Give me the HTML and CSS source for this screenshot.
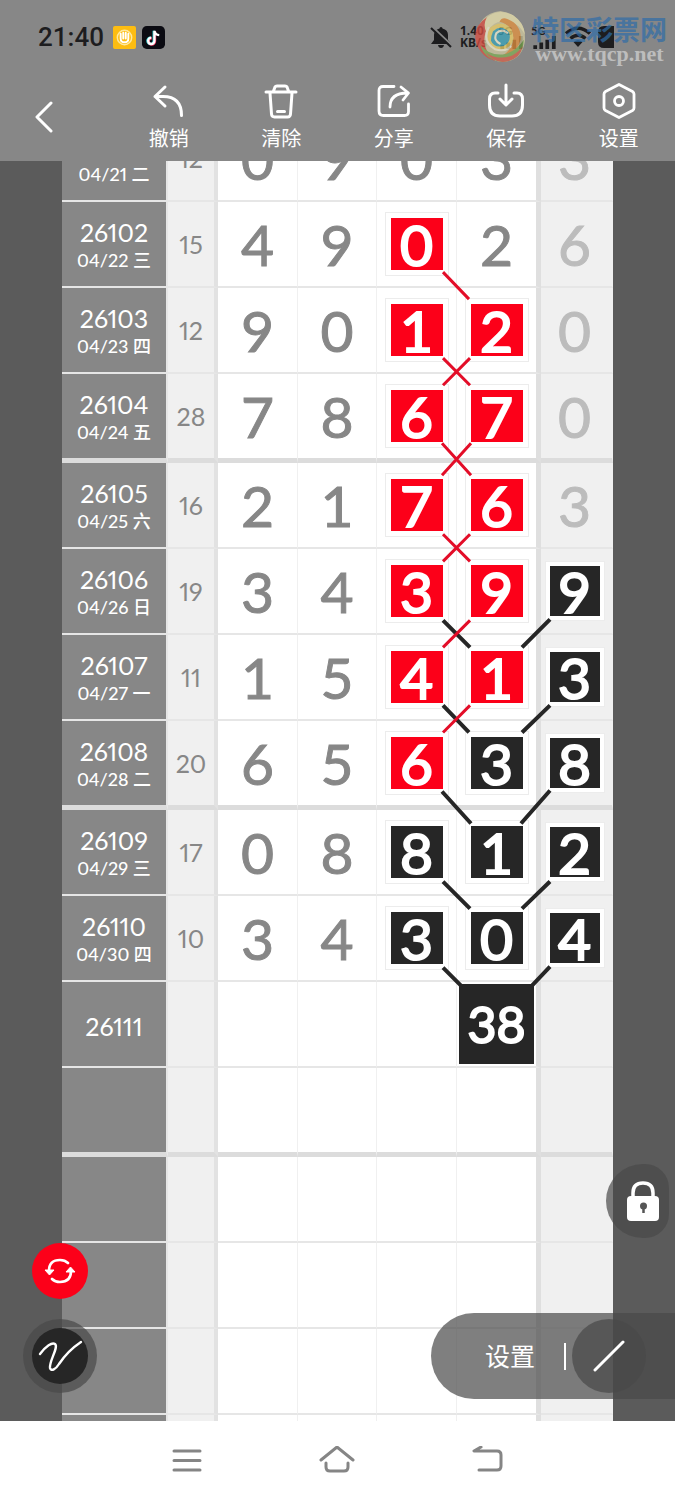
FILE: index.html
```html
<!DOCTYPE html>
<html lang="zh-CN">
<head>
  <meta charset="UTF-8">
  <meta name="viewport" content="width=device-width, initial-scale=1.0">
  <title>走势图</title>
  <link rel="stylesheet" href="styles.css">
</head>
<body>
  <header>
    <div class="status-bar">
      <span class="time">21:40</span>
      <svg class="app-icon" viewBox="0 0 24 24">
        <rect width="24" height="24" rx="2" fill="#fdbd12"/>
        <circle cx="12" cy="12" r="7.500" fill="none" stroke="#ffe9a0" stroke-width="1.500"/>
        <path d="M8 8v5q0 4 4 4t4-4V8M10.700 7v6M13.300 7v6" fill="none" stroke="#fff" stroke-width="2" stroke-linecap="round"/>
      </svg>
      <svg class="app-icon" viewBox="0 0 24 24">
        <rect width="24" height="24" rx="5" fill="#0b0b12"/>
        <path d="M12.300 5v10.500a3.300 3.300 0 1 1-3.300-3.300" fill="none" stroke="#35e0e0" stroke-width="2.600"/>
        <path d="M13.500 5.500v10.500a3.300 3.300 0 1 1-3.300-3.300" fill="none" stroke="#f2335d" stroke-width="2.600"/>
        <path d="M13 5v10.500a3.300 3.300 0 1 1-3.300-3.300M13 5q.5 4 5 4.500" fill="none" stroke="#fff" stroke-width="2.400"/>
      </svg>
      <div class="status-right">
        <svg class="bell" viewBox="0 0 22 22">
          <path d="M11 1q1.500 0 1.500 1.600Q18 4 18 9v5l3 4H1l3-4V9q0-5 5.500-6.400Q9.500 1 11 1zM8 19h6q-.5 3-3 3t-3-3z" fill="#1d1d1f"/>
          <path d="M2 .5l20 19" stroke="#878787" stroke-width="2"/>
          <path d="M1 2l20 19" stroke="#1d1d1f" stroke-width="2"/>
        </svg>
        <span class="speed">1.40<br>KB/s</span>
        <span class="signal first">5G
          <svg viewBox="0 0 27 14"><path d="M3.500 14v-4M10 14V7M16.500 14V4M23.500 14V0" stroke="#1d1d1f" stroke-width="4"/></svg>
        </span>
        <span class="signal">5G
          <svg viewBox="0 0 27 14"><path d="M3.500 14v-4M10 14V7M16.500 14V4M23.500 14V0" stroke="#1d1d1f" stroke-width="4"/></svg>
        </span>
        <svg class="wifi" viewBox="0 0 28 24">
          <path d="M2 8.500Q14-2 26 8.500M6.500 13.500q7.500-6.500 15 0" fill="none" stroke="#1d1d1f" stroke-width="3.500"/>
          <path d="M9.500 17q4.500-3.500 9 0L14 22z" fill="#1d1d1f"/>
        </svg>
        <svg class="battery" viewBox="0 0 16 24"><path d="M16 1H6Q0 1 0 7v10q0 6 6 6h10z" fill="#1d1d1f"/></svg>
      </div>
    </div>

    <nav class="toolbar">
      <button class="back" aria-label="返回">
        <svg viewBox="0 0 18 32"><path d="M16 2L2 16l14 14" fill="none" stroke="#fff" stroke-width="3" stroke-linecap="round" stroke-linejoin="round"/></svg>
      </button>
      <button>
        <svg viewBox="0 0 36 36"><path d="M14 4L4 13.500 14 23M4 13.500h8q18.500 0 18.500 19" fill="none" stroke="#fff" stroke-width="3" stroke-linecap="round" stroke-linejoin="round"/></svg>
        <span>撤销</span>
      </button>
      <button>
        <svg viewBox="0 0 36 36"><path d="M3 9h30M10.500 8l1.500-4q.5-1 2-1h8q1.500 0 2 1l1.500 4M7 10l1.500 21q.200 3 3 3h13q2.800 0 3-3L29 10M14.500 28.500h7" fill="none" stroke="#fff" stroke-width="3" stroke-linecap="round" stroke-linejoin="round"/></svg>
        <span>清除</span>
      </button>
      <button>
        <svg viewBox="0 0 36 36"><path d="M18 3.500H7q-4 0-4 4V28q0 4.500 4.500 4.500h21q4 0 4-4V21M14 24q0-14 17.500-14M25 4l7.500 6L27 17" fill="none" stroke="#fff" stroke-width="2.800" stroke-linecap="round" stroke-linejoin="round"/></svg>
        <span>分享</span>
      </button>
      <button>
        <svg viewBox="0 0 36 36"><path d="M10 10H7q-5.500 0-5.500 6v6Q1.500 33 12 33h12q10.500 0 10.500-11v-6q0-6-5.500-6h-3M18 2v19M12 16l6 6 6-6" fill="none" stroke="#fff" stroke-width="3" stroke-linecap="round" stroke-linejoin="round"/></svg>
        <span>保存</span>
      </button>
      <button>
        <svg viewBox="0 0 36 36"><path d="M18 1.500l13.500 7q1.500 1 1.500 2.500v14q0 1.500-1.500 2.500L18 34.500l-13.500-7Q3 26.500 3 25V11q0-1.500 1.500-2.500z" fill="none" stroke="#fff" stroke-width="2.800" stroke-linejoin="round"/><circle cx="18" cy="18" r="4.500" fill="none" stroke="#fff" stroke-width="2.800"/></svg>
        <span>设置</span>
      </button>
    </nav>
  </header>

  <div class="watermark">
    <svg viewBox="0 0 50 50">
      <path d="M25 1Q2 4 3 28q4 19 24 21 18-1 21-19Q50 6 25 1z" fill="#cfc9a0"/>
      <path d="M12 7Q-2 16 2 31q5 14 18 17Q8 38 10 25 12 12 24 9q-7-4-12-2z" fill="#dc4f42"/>
      <path d="M12 7Q24-2 37 5q10 7 11 18-6-11-17-12Q17 9 12 22 8 14 12 7z" fill="#ece3ae"/>
      <path d="M30 8q15 5 14 20-4 15-20 17 13-7 13-19-1-12-13-15 2-4 6-3z" fill="#e4923f"/>
      <path d="M6 33q8 10 21 9 12-2 20-14-1 19-20 21Q10 47 6 33z" fill="#7fae55"/>
      <path d="M11 40q12 8 25 3 7-4 10-9-3 14-19 15-10-1-16-9z" fill="#d9604a"/>
      <path d="M15 17q11-9 20 1 6 12-5 19-12 5-17-6-2-8 2-14z" fill="#efd268"/>
      <path d="M18 20q8-7 15 1 3 9-5 13-9 2-12-5 0-5 2-9z" fill="#3aa3ba"/>
      <path d="M14 16q-7 14 6 21 9 3 15-3M32 22q-6-5-11 0-3 7 4 10" fill="none" stroke="#f4efd2" stroke-width="2"/>
    </svg>
    <div>
      <div class="site-name">特区彩票网</div>
      <div class="site-url">www.tqcp.net</div>
    </div>
  </div>

  <main>
    <div class="chart">
      <table>
        <colgroup>
          <col class="col-period"><col class="col-sum"><col class="col-a"><col class="col-b"><col class="col-a"><col class="col-d"><col class="col-last">
        </colgroup>
        <tbody>
          <tr><th>26101<small>04/21 二</small></th><td>12</td><td>0</td><td>9</td><td>0</td><td>3</td><td>3</td></tr>
          <tr><th>26102<small>04/22 三</small></th><td>15</td><td>4</td><td>9</td><td><span class="mark red">0</span></td><td>2</td><td>6</td></tr>
          <tr><th>26103<small>04/23 四</small></th><td>12</td><td>9</td><td>0</td><td><span class="mark red">1</span></td><td><span class="mark red">2</span></td><td>0</td></tr>
          <tr class="week-end"><th>26104<small>04/24 五</small></th><td>28</td><td>7</td><td>8</td><td><span class="mark red">6</span></td><td><span class="mark red">7</span></td><td>0</td></tr>
          <tr><th>26105<small>04/25 六</small></th><td>16</td><td>2</td><td>1</td><td><span class="mark red">7</span></td><td><span class="mark red">6</span></td><td>3</td></tr>
          <tr><th>26106<small>04/26 日</small></th><td>19</td><td>3</td><td>4</td><td><span class="mark red">3</span></td><td><span class="mark red">9</span></td><td><span class="mark">9</span></td></tr>
          <tr><th>26107<small>04/27 一</small></th><td>11</td><td>1</td><td>5</td><td><span class="mark red">4</span></td><td><span class="mark red">1</span></td><td><span class="mark">3</span></td></tr>
          <tr class="week-end"><th>26108<small>04/28 二</small></th><td>20</td><td>6</td><td>5</td><td><span class="mark red">6</span></td><td><span class="mark">3</span></td><td><span class="mark">8</span></td></tr>
          <tr><th>26109<small>04/29 三</small></th><td>17</td><td>0</td><td>8</td><td><span class="mark">8</span></td><td><span class="mark">1</span></td><td><span class="mark">2</span></td></tr>
          <tr><th>26110<small>04/30 四</small></th><td>10</td><td>3</td><td>4</td><td><span class="mark">3</span></td><td><span class="mark">0</span></td><td><span class="mark">4</span></td></tr>
          <tr><th>26111</th><td></td><td></td><td></td><td></td><td><span class="pick">38</span></td><td></td></tr>
          <tr class="week-end"><th></th><td></td><td></td><td></td><td></td><td></td><td></td></tr>
          <tr><th></th><td></td><td></td><td></td><td></td><td></td><td></td></tr>
          <tr><th></th><td></td><td></td><td></td><td></td><td></td><td></td></tr>
          <tr><th></th><td></td><td></td><td></td><td></td><td></td><td></td></tr>
          <tr><th></th><td></td><td></td><td></td><td></td><td></td><td></td></tr>
        </tbody>
      </table>
      <!-- connecting lines between the marked numbers -->
      <svg class="lines" viewBox="62 116 551 1384" preserveAspectRatio="none">
        <path class="red-line" d="M443 272L469 299M443 358L470 385M470 358L443 385M442 443L471 475M471 443L442 475M443 534L470 561M470 534L443 561"/>
        <path class="black-line" d="M443 620L470 647M443 705L469 732"/>
        <path class="red-line" d="M470 620L443 647M470 705L443 732"/>
        <path class="black-line" d="M550 619L522 647M550 705L522 732M442 791L471 823M550 790L521 823M443 881L470 908M550 881L522 908M443 967L462 986M550 966L531 986"/>
      </svg>
    </div>

    <button class="lock" aria-label="锁定">
      <svg viewBox="0 0 34 40">
        <path d="M7 18v-6Q7 2 17 2t10 10v6" fill="none" stroke="#fff" stroke-width="3.500"/>
        <rect x="1" y="15" width="32" height="25" rx="4" fill="#fff"/>
        <circle cx="17.500" cy="25" r="3.500" fill="#555"/><path d="M17.500 25v7" stroke="#555" stroke-width="2.500"/>
      </svg>
    </button>
    <button class="refresh" aria-label="切换">
      <svg viewBox="0 0 32 28">
        <path d="M5 14Q5 3 16 3q5 0 8 3M27 14q0 11-11 11-5 0-8-3" fill="none" stroke="#fff" stroke-width="2.600" stroke-linecap="round"/>
        <path d="M1 13h9l-4.500 5zM22 15h9l-4.500-5z" fill="#fff" stroke="#fff" stroke-width="1" stroke-linejoin="round"/>
      </svg>
    </button>
    <button class="pen" aria-label="画笔">
      <svg viewBox="0 0 56 56"><path d="M8 26C14 18 20 14 23 16C27 19 17 33 18 40C19 44 24 41 27 36C33 27 40 20 49 14" fill="none" stroke="#fff" stroke-width="2.400" stroke-linecap="round"/></svg>
    </button>
    <div class="line-panel">
      <button class="line-settings">设置</button>
      <button class="line-tool" aria-label="直线">
        <svg viewBox="0 0 32 32"><path d="M2 30L30 2" stroke="#fff" stroke-width="3" stroke-linecap="round"/></svg>
      </button>
    </div>
  </main>

  <footer>
    <button aria-label="菜单"><svg viewBox="0 0 36 30"><path d="M5 5h26M5 14.500h26M5 24h26" class="nav-stroke"/></svg></button>
    <button aria-label="主页"><svg viewBox="0 0 36 30"><path d="M2 14L18 1l16 13M7 17v4q0 4 4 4h14q4 0 4-4v-4" class="nav-stroke"/></svg></button>
    <button aria-label="后退"><svg viewBox="0 0 36 30"><path d="M11 1L4 5h23q4 0 4 4v11q0 4-4 4H9" class="nav-stroke"/></svg></button>
  </footer>
</body>
</html>
```

FILE: styles.css
```css
* {
  box-sizing: border-box;
}

body {
  margin: 0;
  height: 100vh;
  display: flex;
  flex-direction: column;
  background: #fff;
  font-family: Lato, "Noto Sans CJK SC", sans-serif;
}

button {
  padding: 0;
  border: none;
  background: none;
  color: #fff;
  font-family: inherit;
  cursor: pointer;
}

svg {
  display: block;
}

header {
  flex: none;
  height: 161px;
  background: #878787;
}

.status-bar {
  display: flex;
  align-items: center;
  height: 74px;
  padding: 0 61px 0 38px;
  color: #1d1d1f;
}

.time {
  margin-right: 9px;
  font-family: Roboto, sans-serif;
  font-size: 26px;
  font-weight: 500;
}

.app-icon {
  width: 23px;
  height: 23px;
  margin-right: 6px;
}

.status-right {
  display: flex;
  align-items: center;
  margin-left: auto;
  gap: 6px;
}

.bell {
  width: 22px;
  height: 22px;
  margin-right: 2px;
}

.speed {
  width: 32px;
  font-family: "Noto Sans", sans-serif;
  font-size: 12px;
  line-height: 12px;
  font-weight: bold;
}

.signal {
  width: 27px;
  font-size: 11px;
  line-height: 11px;
  font-weight: bold;
}

.signal svg {
  width: 27px;
  height: 13px;
}

.wifi {
  width: 28px;
  height: 24px;
}

.battery {
  width: 16px;
  height: 24px;
}

.watermark {
  position: absolute;
  top: 10px;
  right: 8px;
  display: flex;
  gap: 5px;
}

.watermark svg {
  width: 53px;
  height: 53px;
  opacity: 0.75;
}

.site-name {
  color: #2f6da8;
  font-family: "Noto Sans CJK SC", sans-serif;
  font-size: 27px;
  line-height: 38px;
  font-weight: bold;
  opacity: 0.7;
}

.site-url {
  margin-top: -5px;
  color: #bdbdbd;
  font-family: "Liberation Serif", serif;
  font-size: 22px;
  line-height: 22px;
  font-weight: bold;
  text-align: center;
}

.toolbar {
  display: grid;
  grid-template-columns: repeat(6, 1fr);
}

.toolbar button {
  display: flex;
  flex-direction: column;
  align-items: center;
  padding-top: 9px;
  font-size: 20px;
  line-height: 28px;
}

.toolbar button svg {
  width: 36px;
  height: 36px;
  margin-bottom: 5px;
}

.toolbar .back {
  padding: 27px 24px 0 0;
}

.toolbar .back svg {
  width: 18px;
  height: 32px;
}

main {
  position: relative;
  flex: 1;
  overflow: hidden;
  background: #5b5b5b;
}

/* chart is scrolled partway into its first row */
.chart {
  position: relative;
  margin: -45px 62px 0;
}

table {
  width: 100%;
  table-layout: fixed;
  border-collapse: separate;
  border-spacing: 0;
  background: #fff;
}

.col-period { width: 106px; }
.col-sum { width: 50px; }
.col-a { width: 80px; }
.col-b { width: 79px; }
.col-d { width: 84px; }
.col-last { width: 72px; }

th,
td {
  height: 86px;
  padding: 0;
  border-right: 1px solid #f0f0f0;
  border-bottom: 2px solid #e6e6e6;
  color: #878787;
  font-size: 57px;
  font-weight: normal;
  line-height: 64px;
  text-align: center;
  vertical-align: middle;
  -webkit-text-stroke: 1px currentColor;
}

.week-end th,
.week-end td {
  height: 89px;
  border-bottom-width: 5px;
  border-bottom-color: #dcdcdc;
}

th {
  padding-top: 3px;
  border-right: 2px solid #e6e6e6;
  background: #878787;
  color: #fff;
  font-size: 25px;
  line-height: 28px;
  font-variant-numeric: proportional-nums;
  -webkit-text-stroke: 0;
}

th small {
  display: block;
  font-size: 18px;
  font-weight: 500;
}

td:nth-child(2) {
  border-right: 4px solid #e2e2e2;
  background: #f0f0f0;
  font-size: 25px;
  line-height: 28px;
  font-variant-numeric: proportional-nums;
  -webkit-text-stroke: 0;
}

td:nth-child(6) {
  border-right: 5px solid #dfdfdf;
}

td:nth-child(7) {
  padding-right: 4px;
  background: #f0f0f0;
  color: #bcbcbc;
}

.mark {
  display: block;
  width: 64px;
  height: 64px;
  margin: 0 auto;
  border: 1px solid #ececec;
  background: #262626;
  box-shadow: inset 0 0 0 5px #fff;
  color: #fff;
  line-height: 62px;
  -webkit-text-stroke: 2px currentColor;
}

.mark.red {
  background: #fc0019;
}

td:nth-child(7) .mark {
  width: 60px;
  height: 60px;
  box-shadow: inset 0 0 0 4px #fff;
  line-height: 58px;
}

.pick {
  display: block;
  height: 80px;
  margin: 0 2px;
  background: #262626;
  color: #fff;
  font-size: 50px;
  line-height: 80px;
  -webkit-text-stroke: 2px currentColor;
}

.lines {
  position: absolute;
  top: 0;
  left: 0;
  width: 100%;
  height: 100%;
}

.red-line {
  stroke: #e30d28;
  stroke-width: 3;
}

.black-line {
  stroke: #262626;
  stroke-width: 4;
}

.lock {
  position: absolute;
  right: 6px;
  bottom: 183px;
  display: flex;
  align-items: center;
  width: 63px;
  height: 74px;
  padding-left: 20px;
  border-radius: 37px 24px 24px 37px;
  background: rgba(73, 73, 73, 0.7);
}

.lock svg {
  width: 34px;
  height: 40px;
}

.refresh {
  position: absolute;
  left: 32px;
  bottom: 122px;
  display: flex;
  align-items: center;
  justify-content: center;
  width: 56px;
  height: 56px;
  border-radius: 50%;
  background: #fc0019;
}

.refresh svg {
  width: 32px;
  height: 28px;
}

.pen {
  position: absolute;
  left: 23px;
  bottom: 28px;
  width: 74px;
  height: 74px;
  padding: 9px;
  border-radius: 50%;
  background: rgba(73, 73, 73, 0.7);
}

.pen svg {
  width: 56px;
  height: 56px;
  border-radius: 50%;
  background: #262626;
}

.line-panel {
  position: absolute;
  right: 0;
  bottom: 22px;
  display: flex;
  align-items: center;
  width: 244px;
  height: 86px;
  padding-left: 54px;
  border-radius: 43px 0 0 43px;
  background: rgba(73, 73, 73, 0.7);
}

.line-settings {
  width: 81px;
  padding-right: 30px;
  border-right: 2px solid #fff;
  font-size: 25px;
  line-height: 27px;
  white-space: nowrap;
}

.line-tool {
  display: flex;
  align-items: center;
  justify-content: center;
  width: 74px;
  height: 74px;
  margin-left: 6px;
  border-radius: 50%;
  background: rgba(73, 73, 73, 0.7);
}

.line-tool svg {
  width: 32px;
  height: 32px;
}

footer {
  flex: none;
  display: grid;
  grid-template-columns: 2fr 2fr 2fr;
  padding: 0 16.600%;
  height: 79px;
  background: #fff;
}

footer button {
  display: flex;
  align-items: center;
  justify-content: center;
}

footer svg {
  width: 36px;
  height: 30px;
}

.nav-stroke {
  fill: none;
  stroke: #858585;
  stroke-width: 3;
  stroke-linecap: round;
  stroke-linejoin: round;
}
```
